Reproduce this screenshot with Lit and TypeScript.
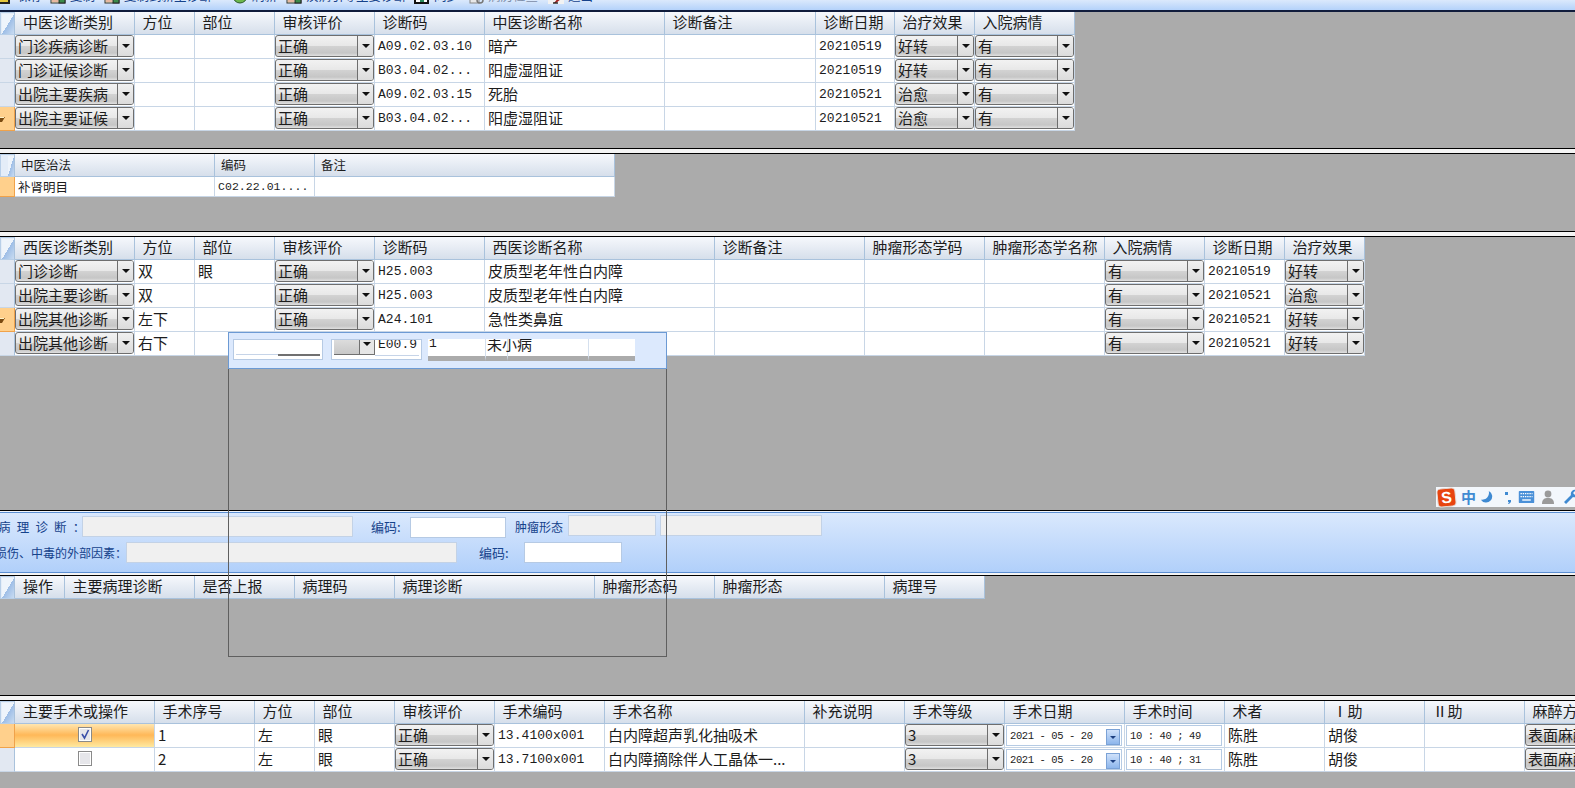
import { LitElement, html, css, svg } from "lit";
import { customElement } from "lit/decorators.js";

type Cell = string | { t: "c" | "m" | "check" | "date" | "time"; v?: string; on?: boolean; hot?: boolean };
const c = (v: string): Cell => ({ t: "c", v });
const m = (v: string): Cell => ({ t: "m", v });

interface Grid { cols: number[]; head: string[]; rows: Cell[][]; sel?: number; mark?: number; small?: boolean; }

const g1: Grid = {
  cols: [15, 120, 60, 80, 100, 110, 180, 151, 79, 80, 100],
  head: ["中医诊断类别", "方位", "部位", "审核评价", "诊断码", "中医诊断名称", "诊断备注", "诊断日期", "治疗效果", "入院病情"],
  sel: 3, mark: 3,
  rows: [
    [c("门诊疾病诊断"), "", "", c("正确"), m("A09.02.03.10"), "暗产", "", m("20210519"), c("好转"), c("有")],
    [c("门诊证候诊断"), "", "", c("正确"), m("B03.04.02..."), "阳虚湿阻证", "", m("20210519"), c("好转"), c("有")],
    [c("出院主要疾病"), "", "", c("正确"), m("A09.02.03.15"), "死胎", "", m("20210521"), c("治愈"), c("有")],
    [c("出院主要证候"), "", "", c("正确"), m("B03.04.02..."), "阳虚湿阻证", "", m("20210521"), c("治愈"), c("有")],
  ],
};
const g2: Grid = {
  cols: [15, 200, 100, 300], head: ["中医治法", "编码", "备注"], sel: 0, small: true,
  rows: [["补肾明目", m("C02.22.01...."), ""]],
};
const g3: Grid = {
  cols: [15, 120, 60, 80, 100, 110, 230, 150, 120, 120, 100, 80, 80],
  head: ["西医诊断类别", "方位", "部位", "审核评价", "诊断码", "西医诊断名称", "诊断备注", "肿瘤形态学码", "肿瘤形态学名称", "入院病情", "诊断日期", "治疗效果"],
  sel: 2, mark: 2,
  rows: [
    [c("门诊诊断"), "双", "眼", c("正确"), m("H25.003"), "皮质型老年性白内障", "", "", "", c("有"), m("20210519"), c("好转")],
    [c("出院主要诊断"), "双", "", c("正确"), m("H25.003"), "皮质型老年性白内障", "", "", "", c("有"), m("20210521"), c("治愈")],
    [c("出院其他诊断"), "左下", "", c("正确"), m("A24.101"), "急性类鼻疽", "", "", "", c("有"), m("20210521"), c("好转")],
    [c("出院其他诊断"), "右下", "", c("正确"), m("E00.9"), "", "", "", "", c("有"), m("20210521"), c("好转")],
  ],
};
const g4: Grid = {
  cols: [15, 50, 130, 100, 100, 200, 120, 170, 100],
  head: ["操作", "主要病理诊断", "是否上报", "病理码", "病理诊断", "肿瘤形态码", "肿瘤形态", "病理号"],
  rows: [],
};
const g5: Grid = {
  cols: [15, 140, 100, 60, 80, 100, 110, 200, 100, 100, 120, 100, 100, 100, 100, 100],
  head: ["主要手术或操作", "手术序号", "方位", "部位", "审核评价", "手术编码", "手术名称", "补充说明", "手术等级", "手术日期", "手术时间", "术者", "Ⅰ助", "Ⅱ助", "麻醉方式"],
  sel: 0,
  rows: [
    [{ t: "check", on: true, hot: true }, "1", "左", "眼", c("正确"), m("13.4100x001"), "白内障超声乳化抽吸术", "", c("3"), { t: "date", v: "2021 - 05 - 20" }, { t: "time", v: "10 : 40 ; 49" }, "陈胜", "胡俊", "", c("表面麻醉")],
    [{ t: "check", on: false }, "2", "左", "眼", c("正确"), m("13.7100x001"), "白内障摘除伴人工晶体一...", "", c("3"), { t: "date", v: "2021 - 05 - 20" }, { t: "time", v: "10 : 40 ; 31" }, "陈胜", "胡俊", "", c("表面麻醉")],
  ],
};

const doc = (accent: string) => svg`<svg viewBox="0 0 16 16" width="16" height="16"><rect x="1" y="1" width="14" height="14" fill="#f4efc8" stroke="#333"/><rect x="9" y="9" width="6" height="6" fill="#3c8a4a" stroke="#222"/><rect x="2" y="11" width="6" height="3" fill="${accent}"/></svg>`;
const icons: Record<string, unknown> = {
  save: svg`<svg viewBox="0 0 16 16" width="16" height="16"><rect x="1" y="1" width="14" height="14" fill="#e3c63c" stroke="#222" stroke-width="2"/></svg>`,
  doc: doc("#e8b8a0"),
  ball: svg`<svg viewBox="0 0 16 16" width="16" height="16"><circle cx="8" cy="8" r="7" fill="#6cb84c" stroke="#2a5a2a"/></svg>`,
  sync: svg`<svg viewBox="0 0 16 16" width="16" height="16"><rect x="1" y="1" width="13" height="14" fill="#fff" stroke="#111" stroke-width="2"/><rect x="6" y="8" width="4" height="6" fill="#2a8a5a"/></svg>`,
  grey: svg`<svg viewBox="0 0 16 16" width="16" height="16"><rect x="2" y="1" width="9" height="14" fill="#e8e8e8" stroke="#888"/><circle cx="12" cy="12" r="3" fill="none" stroke="#777" stroke-width="1.5"/></svg>`,
  exit: svg`<svg viewBox="0 0 16 16" width="16" height="16"><rect x="0" y="6" width="16" height="10" fill="#f2f2f2"/><path d="M6 15 L11 9 L13 11 L8 15 Z" fill="#a02020"/><path d="M5 15h5" stroke="#222" stroke-width="1.4"/></svg>`,
};

const tools = [
  { i: "save", l: "保存", w: 56 },
  { i: "doc", l: "复制", w: 54 },
  { i: "doc", l: "复制到新生诊断", w: 128 },
  { i: "ball", l: "刷新", w: 54 },
  { i: "doc", l: "疾病引导主要诊断", w: 128 },
  { i: "sync", l: "同步", w: 54 },
  { i: "grey", l: "病历检查", w: 80, dim: true },
  { i: "exit", l: "退出", w: 50 },
];

@customElement("app-root")
export class AppRoot extends LitElement {
  static styles = css`
    :host { display: block; position: relative; width: 1575px; height: 788px; overflow: hidden; background: #ababab;
      font-family: "Noto Sans CJK SC", "Liberation Sans", sans-serif; color: #1c1c1c; }
    * { box-sizing: border-box; }

    .toolbar { display: flex; height: 12px; overflow: hidden; background: linear-gradient(#dbe9fc, #b4d2fa);
      border-bottom: 2px solid #101c3c; }
    .tool { display: flex; flex: none; gap: 4px; height: 10px; }
    .tool:first-child { margin-left: -6px; gap: 8px; }
    .tool svg { flex: none; margin-top: -12px; }
    .tool span { font-size: 12.5px; line-height: 14px; margin-top: -11px; color: #15428b; white-space: nowrap; }
    .tool.dim span { color: #7a8ba6; }

    .sec { overflow: hidden; }
    .s1 { height: 136px; } .s2 { height: 77px; } .s3 { height: 273px; } .s4 { height: 119px; } .s5 { height: 86px; }
    .split { height: 6px; background: #f4f4f4; border-top: 1px solid #000; border-bottom: 1px solid #000; }

    .grid { display: grid; width: max-content; font-size: 15px; line-height: 20px; }
    .hd { height: 23px; padding: 0 0 0 7.5px; background: linear-gradient(#f6f8fc, #d6dfeb); border-right: 1px solid #a9c2dc;
      border-bottom: 1px solid #a9c2dc; white-space: nowrap; overflow: hidden; }
    .corner + .hd { padding-left: 8px; }
    .corner { padding: 0; background: #e4edf8; border: 1px solid #b8cfe8; border-right-color: #a9c2dc; display: flex; }
    .corner i { flex: 1; margin: 1px 0 0 1px; background: linear-gradient(to bottom right, #eef4fb 50%, #9dbde6 50%, #c9dcf2); }
    .rh { height: 24px; background: #e2e8f2; border-right: 1px solid #a9c2dc; border-bottom: 1px solid #c8d6e6; display: flex; align-items: center; overflow: hidden; }
    .rh.sel { background: #ffd08c; border-right: 1px solid #f0a24a; border-bottom: 1px solid #f0a24a; }
    .rh svg { margin-left: -3px; }
    .td { height: 24px; background: #fff; border-right: 1px solid #c8d6e6; border-bottom: 1px solid #c8d6e6; padding: 1px 0 0 3px;
      white-space: nowrap; overflow: hidden; }
    .td.box { padding: 0; }
    .td.hot { background: linear-gradient(#ffe6b0, #ffb858 48%, #ffe9a0); }
    .mono { font-family: "Liberation Mono", monospace; font-size: 13px; letter-spacing: 0.05px; display: block; line-height: 22px; }

    .grid.small { font-size: 12.5px; }
    .grid.small .hd { padding-left: 6px; line-height: 21px; }
    .grid.small .td, .grid.small .rh { height: 20px; padding-top: 0; line-height: 19px; }
    .grid.small .mono { font-size: 11.5px; line-height: 19px; }

    .combo { display: flex; height: 22px; border: 1px solid #6e6e6e; border-radius: 3px; overflow: hidden;
      background: linear-gradient(#f2f2f2, #e8e8e8 48%, #d2d2d2 52%, #c6c6c6 85%, #e0e0e0); }
    .combo b { flex: 1; min-width: 0; font-weight: 400; padding-left: 2px; line-height: 19px; overflow: hidden; }
    .combo u { flex: none; width: 16px; border-left: 1px solid #6e6e6e; display: flex; align-items: center; justify-content: center;
      background: linear-gradient(#f0f0f0, #dcdcdc); text-decoration: none; }
    .tri { width: 0; height: 0; border-left: 4px solid transparent; border-right: 4px solid transparent; border-top: 4px solid #111; }

    .chk { display: flex; justify-content: center; padding-top: 3px; }
    .date, .time { display: flex; align-items: center; height: 21px; margin: 1px 2px 0 1px; border: 1px solid #b6cbe4; background: #fff;
      font-family: "Liberation Mono", monospace; font-size: 10.5px; letter-spacing: -0.4px; padding-left: 3px; white-space: pre; }
    .date em { font-style: normal; flex: 1; }
    .date u { flex: none; width: 14px; height: 16px; margin: 3px 1px 0 0; border: 1px solid #7ba2d6; background: linear-gradient(#cfe1fa, #8db6ec);
      display: flex; align-items: center; justify-content: center; text-decoration: none; }
    .date .tri { border-left-width: 3px; border-right-width: 3px; border-top: 3px solid #1c3f80; }

    .band { height: 66px; border-top: 1px solid #000; background: linear-gradient(#dbe9fd, #aecefa); color: #15428b; font-size: 12.5px;
      display: flex; flex-direction: column; }
    .band-in { height: 60px; border-top: 1px solid #f2f6fc; display: flex; flex-direction: column; gap: 5px; }
    .band-in::before { content: ""; display: block; height: 1px; margin-bottom: -2px; background: #5c8fd2; }
    .band-foot { height: 4px; border-top: 1px solid #5c8fd2; background: #f4f4f4; border-bottom: 1px solid #000; margin-top: auto; }
    .fr { display: flex; align-items: flex-start; height: 21px; white-space: nowrap; line-height: 21px; }
    .fld { flex: none; height: 21px; border: 1px solid #c3d2e6; background: #f0f0f0; }
    .fld.w { background: #fff; border-color: #b6cae4; margin-top: 1px; }
    .lbl-a { flex: none; width: 84px; margin-left: -2px; letter-spacing: 1.7px; font-size: 12.5px; }
    .lbl-b { flex: none; width: 131px; margin-left: -5px; font-size: 12px; }
    .lbl-c1 { flex: none; width: 39px; margin-left: 18px; font-size: 13px; }
    .lbl-c2 { flex: none; width: 45px; margin-left: 22px; font-size: 13px; }
    .lbl-d { flex: none; width: 53px; margin-left: 9px; font-size: 12px; }
    .f1 { width: 271px; } .f2 { width: 96px; } .f3 { width: 88px; margin-top: -1px; } .f4 { width: 162px; margin: -1px 0 0 4px; }
    .f5 { width: 331px; } .f6 { width: 98px; }
    .fr .f6 { margin-top: 0; }

    .panel { position: absolute; left: 228px; top: 332px; width: 439px; height: 325px; border: 1px solid #5f5f5f; }
    .phead { height: 37px; margin: -1px -1px 0; background: #dce9fd; border: 1px solid #6c9ad4; display: flex; padding: 6px 0 0 4px; align-items: flex-start; }
    .pbox { flex: none; height: 21px; border: 1px solid #b6cae4; background: #fff; padding: 0 2px; overflow: hidden; }
    .p1 { width: 90px; margin-right: 8px; }
    .p1 i { display: block; height: 15px; border-bottom: 1px solid #c6d4e8; }
    .p1 s { display: block; height: 2px; margin: -1px 0 0 42px; background: #707070; }
    .p2 { width: 91px; margin-right: 6px; display: flex; }
    .p2 .gy { width: 25px; height: 15px; background: linear-gradient(#dcdcdc, #c8c8c8); border-bottom: 1px solid #707070; }
    .p2 .bt { width: 16px; height: 15px; background: #e6e6e6; border: 1px solid #707070; border-top: 0; display: flex; justify-content: center; padding-top: 2px; }
    .p2 .tx { flex: 1; height: 16px; border-bottom: 1px solid #c6d4e8; overflow: hidden; font-family: "Liberation Mono", monospace; font-size: 13px; line-height: 9px; padding-left: 3px; }
    .pstrip { flex: none; display: flex; width: 207px; height: 22px; background: #fff; overflow: hidden; }
    .pcell { flex: none; height: 22px; border-bottom: 5px solid #ababab; border-right: 1px solid #d5e0ee; font-size: 15px; line-height: 10px; white-space: nowrap; padding-left: 1px; }
    .pc1 { width: 58px; font-family: "Liberation Mono", monospace; font-size: 13px; }
    .pc2 { width: 22px; } .pc3 { width: 81px; } .pc4 { width: 46px; border-right: 0; }

    .ime { position: absolute; right: 0; top: 487px; width: 139px; height: 20px; background: #f3f7fc; display: flex; align-items: center; color: #3f8ad2; }
    .logo { flex: none; width: 19px; height: 19px; margin-left: 1px; background: #e8440f; border: 1px solid #e2dcd8; border-radius: 4px; transform: rotate(-6deg);
      color: #fff; font: 700 16px/17px "Liberation Sans", sans-serif; text-align: center; }
    .zh { flex: none; margin-left: 5px; font-size: 15px; font-weight: 700; line-height: 20px; }
    .ime svg { flex: none; }
    .i-moon { margin-left: 4px; } .i-dots { margin-left: 10px; } .i-kb { margin-left: 6px; } .i-me { margin-left: 7px; } .i-wr { margin-left: 9px; }
  `;

  private cell(v: Cell) {
    if (typeof v === "string") return html`<div class="td">${v}</div>`;
    switch (v.t) {
      case "c":
        return html`<div class="td box"><div class="combo"><b>${v.v}</b><u><span class="tri"></span></u></div></div>`;
      case "m":
        return html`<div class="td"><span class="mono">${v.v}</span></div>`;
      case "check":
        return html`<div class="td box ${v.hot ? "hot" : ""}"><div class="chk">
          <svg width="14" height="15" viewBox="0 0 14 15"><rect x=".5" y=".5" width="13" height="14" fill="#fff" stroke="#8a8a8a"/><rect x="2" y="2" width="10" height="11" fill="#e6e6ea"/>${v.on ? svg`<path d="M4 7 L6.5 11 L10.5 3" fill="none" stroke="#3a4fa8" stroke-width="1.6"/>` : ""}</svg>
        </div></div>`;
      case "date":
        return html`<div class="td box"><div class="date"><em>${v.v}</em><u><span class="tri"></span></u></div></div>`;
      default:
        return html`<div class="td box"><div class="time">${v.v}</div></div>`;
    }
  }

  private grid(g: Grid) {
    return html`<div class="grid ${g.small ? "small" : ""}" style="grid-template-columns:${g.cols.map((n) => n + "px").join(" ")}">
      <div class="hd corner"><i></i></div>
      ${g.head.map((h) => html`<div class="hd">${h}</div>`)}
      ${g.rows.map((r, i) => html`
        <div class="rh ${g.sel === i ? "sel" : ""}">${g.mark === i
          ? svg`<svg width="9" height="9" viewBox="0 0 9 9"><path d="M1 3h7L5 8H3z" fill="#7a4a10"/><path d="M2 3.5h5" stroke="#fff3c8"/></svg>` : ""}</div>
        ${r.map((v) => this.cell(v))}`)}
    </div>`;
  }

  render() {
    return html`
      <div class="toolbar">
        ${tools.map((t) => html`<div class="tool ${t.dim ? "dim" : ""}" style="width:${t.w}px">${icons[t.i]}<span>${t.l}</span></div>`)}
      </div>
      <div class="sec s1">${this.grid(g1)}</div>
      <div class="split"></div>
      <div class="sec s2">${this.grid(g2)}</div>
      <div class="split"></div>
      <div class="sec s3">${this.grid(g3)}</div>
      <div class="band">
        <div class="band-in">
          <div class="fr">
            <span class="lbl-a">病 理 诊 断 ：</span>
            <div class="fld f1"></div>
            <span class="lbl-c1">编码:</span>
            <div class="fld w f2"></div>
            <span class="lbl-d">肿瘤形态</span>
            <div class="fld f3"></div>
            <div class="fld f4"></div>
          </div>
          <div class="fr">
            <span class="lbl-b">损伤、中毒的外部因素：</span>
            <div class="fld f5"></div>
            <span class="lbl-c2">编码:</span>
            <div class="fld w f6"></div>
          </div>
        </div>
        <div class="band-foot"></div>
      </div>
      <div class="sec s4">${this.grid(g4)}</div>
      <div class="split"></div>
      <div class="sec s5">${this.grid(g5)}</div>

      <div class="panel">
        <div class="phead">
          <div class="pbox p1"><i></i><s></s></div>
          <div class="pbox p2"><div class="gy"></div><div class="bt"><span class="tri"></span></div><div class="tx">E00.9</div></div>
          <div class="pstrip">
            <div class="pcell pc1">1</div>
            <div class="pcell pc2">未小病</div>
            <div class="pcell pc3"></div>
            <div class="pcell pc4"></div>
          </div>
        </div>
      </div>

      <div class="ime">
        <div class="logo">S</div>
        <span class="zh">中</span>
        <svg class="i-moon" width="14" height="14" viewBox="0 0 16 16"><path d="M10 1 A7 7 0 1 1 1 11 A8 8 0 0 0 10 1Z" fill="#3f8ad2"/></svg>
        <svg class="i-dots" width="8" height="14" viewBox="0 0 8 14"><rect x="1" y="2" width="3" height="3" fill="#3f8ad2"/><path d="M4 10h3v2l-2 2H4l1-2H4z" fill="#3f8ad2"/></svg>
        <svg class="i-kb" width="17" height="12" viewBox="0 0 18 14"><rect width="18" height="14" rx="1" fill="#4a90d8"/><path d="M2 3h14M2 6.5h14" stroke="#fff" stroke-width="1.4" stroke-dasharray="1.6 1"/><path d="M4 10.5h10" stroke="#fff" stroke-width="1.6"/></svg>
        <svg class="i-me" width="12" height="14" viewBox="0 0 12 14"><circle cx="6" cy="4" r="3.4" fill="#9a9a9a"/><path d="M0 14c0-5 2.500-6 6-6s6 1 6 6z" fill="#9a9a9a"/></svg>
        <svg class="i-wr" width="16" height="16" viewBox="0 0 16 16"><path d="M15 3l-3 3-2-2 3-3a4 4 0 0 0-5 5L1 13l2 2 7-7a4 4 0 0 0 5-5z" fill="#3f8ad2"/></svg>
      </div>
    `;
  }
}
